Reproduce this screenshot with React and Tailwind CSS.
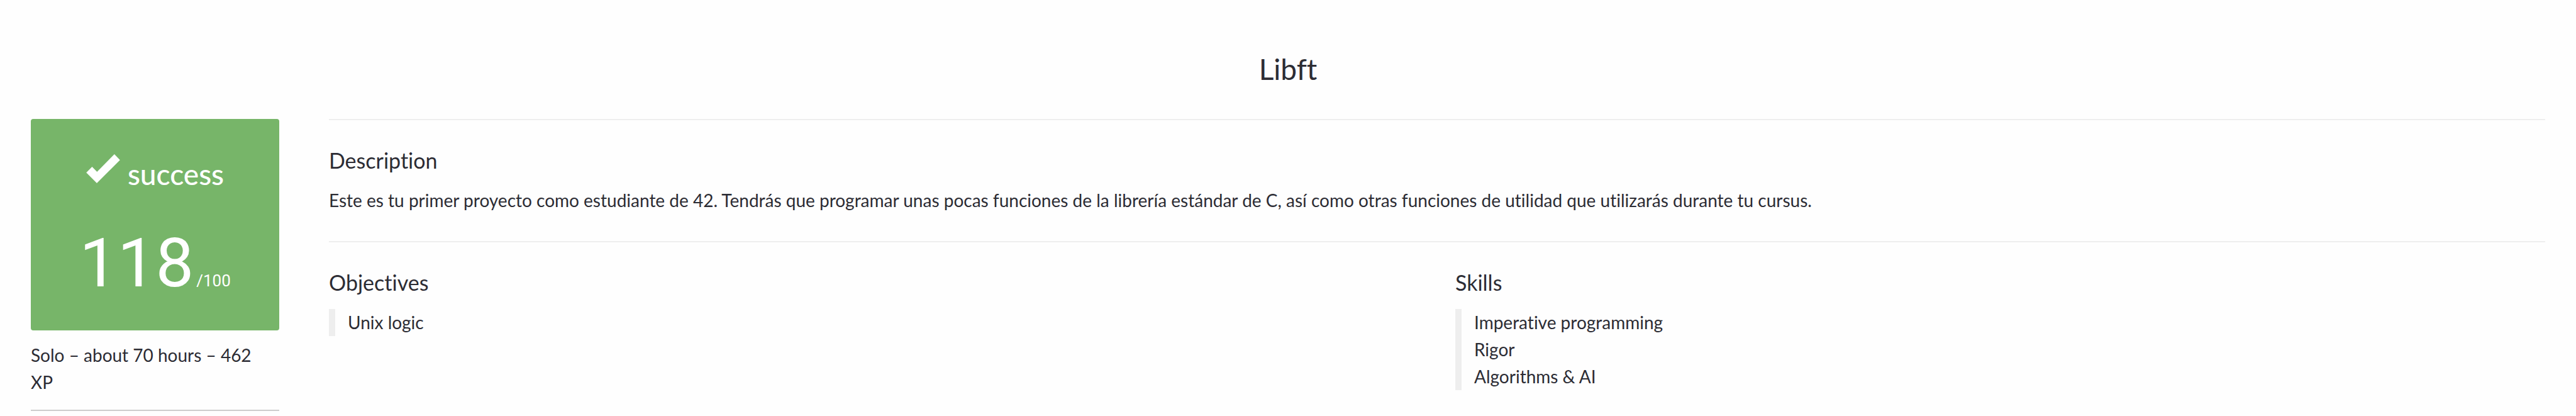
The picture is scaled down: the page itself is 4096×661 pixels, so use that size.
const objectives = ["Unix logic"];
const skills = ["Imperative programming", "Rigor", "Algorithms & AI"];

function CheckIcon() {
  return (
    <svg viewBox="0 0 163 140" className="mb-4 h-[46px] w-[54px] fill-white" aria-hidden="true">
      <path d="M0 89 28 61 52 85 136 0 163 28 51 140Z" />
    </svg>
  );
}

function SectionTitle({ children }) {
  return <h2 className="text-[34px] leading-[44px]">{children}</h2>;
}

function BarList({ title, items }) {
  return (
    <section className="flex flex-col gap-5">
      <SectionTitle>{title}</SectionTitle>
      <ul className="border-l-10 border-[#eeeeee] pl-5">
        {items.map((item) => (
          <li key={item}>{item}</li>
        ))}
      </ul>
    </section>
  );
}

export default function App() {
  return (
    <div className="min-h-screen bg-[#fefefe] px-[49px] pt-20 font-['Lato',sans-serif] text-[28px] leading-[43px] text-[#2c2c34] [font-variant-ligatures:none]">
      <h1 className="mb-[49px] text-center text-[46px] leading-[60px]">Libft</h1>
      <div className="flex items-start gap-[79px]">
        <aside className="w-[395px] shrink-0 border-b-2 border-[#cccccc] pb-[22px]">
          <div className="mb-[18px] flex flex-col items-center rounded bg-[#77b569] pt-14 pb-11 text-white">
            <div className="flex items-end gap-3 text-[46px] leading-[60px] font-medium">
              <CheckIcon />
              <span>success</span>
            </div>
            <div className="mt-12 flex items-baseline gap-1 font-['Roboto',sans-serif]">
              <span className="text-[108px] leading-[126px]">118</span>
              <span className="text-[26px] leading-8">/100</span>
            </div>
          </div>
          <p className="pr-5">Solo – about 70 hours – 462 XP</p>
        </aside>
        <main className="min-w-0 grow">
          <section className="flex flex-col gap-5 border-t-2 border-[#eeeeee] pt-[42px] pb-[43px]">
            <SectionTitle>Description</SectionTitle>
            <p>
              Este es tu primer proyecto como estudiante de 42. Tendrás que programar unas pocas
              funciones de la librería estándar de C, así como otras funciones de utilidad que
              utilizarás durante tu cursus.
            </p>
          </section>
          <div className="grid grid-cols-2 gap-[58px] border-t-2 border-[#eeeeee] pt-[42px]">
            <BarList title="Objectives" items={objectives} />
            <BarList title="Skills" items={skills} />
          </div>
        </main>
      </div>
    </div>
  );
}
